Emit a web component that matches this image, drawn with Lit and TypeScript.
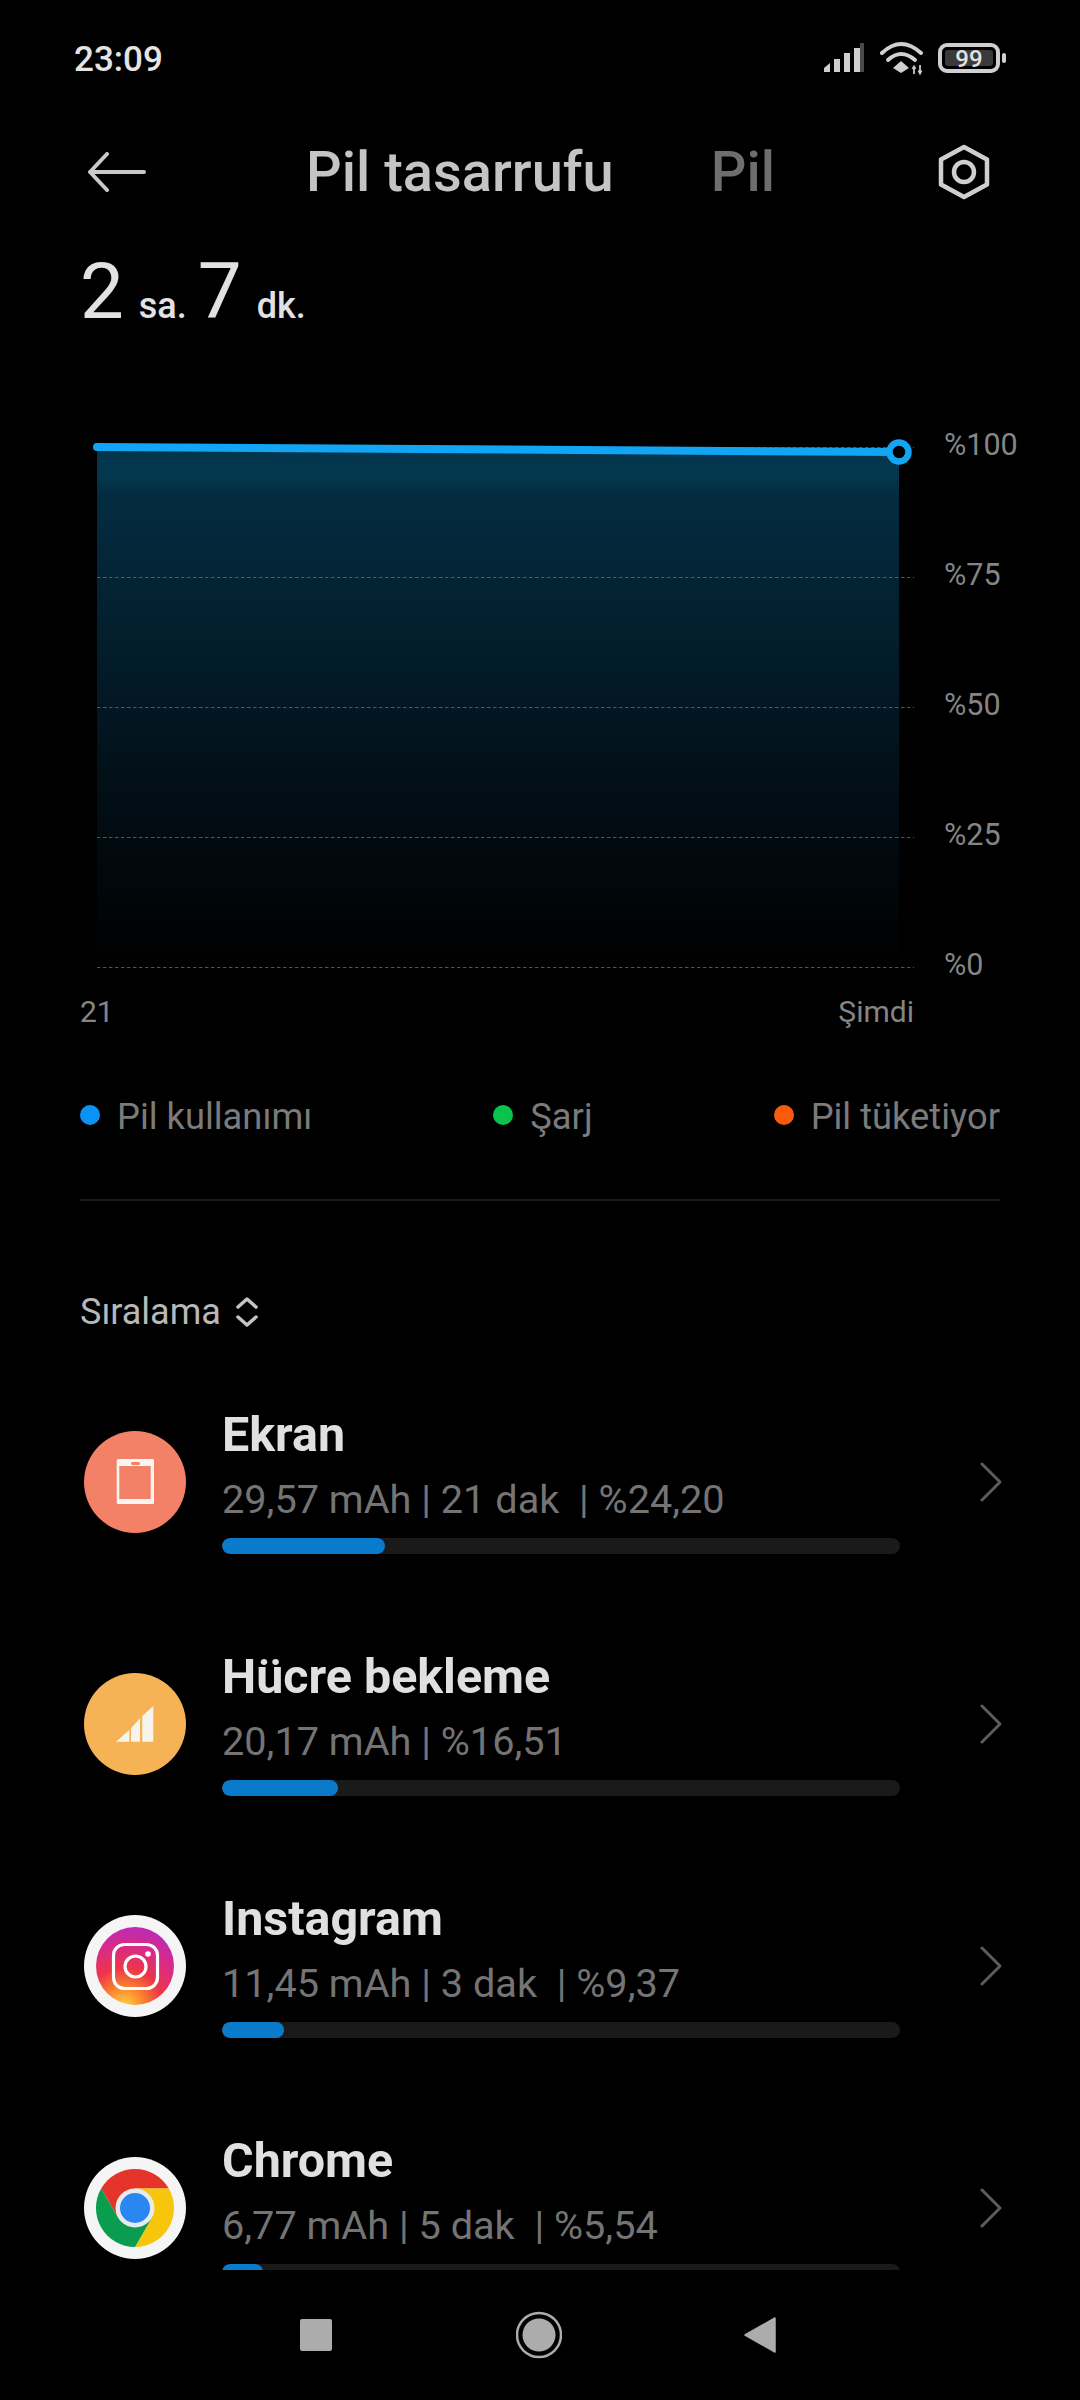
import { LitElement, html, css, svg } from "lit";
import { customElement } from "lit/decorators.js";

const rows = [
  { name: "Ekran", sub: "29,57 mAh | 21 dak  | %24,20", w: 163, icon: "screen" },
  { name: "Hücre bekleme", sub: "20,17 mAh | %16,51", w: 116, icon: "cell" },
  { name: "Instagram", sub: "11,45 mAh | 3 dak  | %9,37", w: 62, icon: "insta" },
  { name: "Chrome", sub: "6,77 mAh | 5 dak  | %5,54", w: 41, icon: "chrome" },
];

const icons: Record<string, unknown> = {
  screen: svg`<circle cx="51" cy="51" r="51" fill="#f28167"/>
    <rect x="32.700" y="28" width="37.300" height="45" rx="1.5" fill="#f7f4f2"/>
    <rect x="35.300" y="35" width="31.400" height="33" fill="#f28167"/>
    <rect x="47" y="31" width="9" height="3" rx="1.500" fill="#f28167"/>`,
  cell: svg`<circle cx="51" cy="51" r="51" fill="#f6b356"/>
    <path d="M32 68.700 L45.300 57 V68.700 Z M47 68.700 V55.300 L56 45.300 V68.700 Z M58.300 68.700 V43 L69.300 33 V68.700 Z" fill="#f7f4ee"/>`,
  insta: svg`<defs>
      <radialGradient id="ig" cx="0.36" cy="1.02" r="1.1">
        <stop offset="0" stop-color="#fdd44f"/>
        <stop offset="0.2" stop-color="#fb8f2c"/>
        <stop offset="0.45" stop-color="#ee3548"/>
        <stop offset="0.72" stop-color="#d62a8c"/>
        <stop offset="1" stop-color="#b62bc0"/>
      </radialGradient>
    </defs>
    <circle cx="51" cy="51" r="51" fill="#f5f5f5"/>
    <circle cx="51" cy="51" r="39" fill="url(#ig)"/>
    <rect x="29.500" y="29.500" width="44" height="44" rx="11" fill="none" stroke="#fff" stroke-width="3.200"/>
    <circle cx="51.500" cy="51.500" r="10.500" fill="none" stroke="#fff" stroke-width="3.200"/>
    <circle cx="64" cy="39" r="2.800" fill="#fff"/>`,
  chrome: svg`<circle cx="51" cy="51" r="51" fill="#f5f5f5"/>
    <path d="M84.800 31.500 A39 39 0 0 0 17.200 31.500 L34.100 60.750 L51 51 L51 31.500 Z" fill="#e5352b"/>
    <path d="M84.800 31.500 A39 39 0 0 1 51 90 L67.900 60.750 L51 51 L51 31.500 Z" fill="#f7c50c"/>
    <path d="M51 90 A39 39 0 0 1 17.200 31.500 L34.100 60.750 L51 51 L67.900 60.750 Z" fill="#0a9d4f"/>
    <circle cx="51" cy="51" r="19.500" fill="#e8eaed"/>
    <circle cx="51" cy="51" r="15" fill="#2a86f0"/>`,
};

@customElement("app-root")
export class AppRoot extends LitElement {
  static styles = css`
    :host {
      display: block;
      width: 1080px;
      height: 2400px;
      background: #000;
      overflow: hidden;
      font-family: Roboto, "Noto Sans", sans-serif;
      color: #ddd;
    }
    svg { display: block; flex: none; }
    .status {
      height: 118px;
      display: flex;
      align-items: center;
      padding: 0 70px 0 74px;
      box-sizing: border-box;
    }
    .clock { font-size: 35px; font-weight: 500; color: #e4e4e4; flex: 1; }
    .header {
      height: 108px;
      display: flex;
      align-items: center;
      padding-left: 88px;
    }
    .title { font-size: 56px; font-weight: 500; color: #c4c4c4; margin-left: 160px; white-space: nowrap; }
    .tab { font-size: 56px; font-weight: 500; color: #6e6e6e; margin-left: 97px; }
    .gear { margin-left: 163px; }
    .summary {
      height: 198px;
      box-sizing: border-box;
      padding: 20px 0 0 80px;
      display: flex;
      align-items: baseline;
      color: #e2e2e2;
    }
    .big { font-size: 78px; line-height: 92px; font-weight: 400; }
    .unit { font-size: 36px; font-weight: 500; margin: 0 11px 0 15px; }
    .chart { display: flex; height: 562px; padding-left: 80px; }
    .yaxis {
      margin: 1px 0 0 24px;
      display: flex;
      flex-direction: column;
      gap: 90px;
      font-size: 30.500px;
      color: #858585;
    }
    .yaxis span { height: 40px; line-height: 40px; }
    .xaxis {
      height: 54px;
      box-sizing: border-box;
      padding-bottom: 3px;
      width: 834px;
      margin-left: 80px;
      display: flex;
      justify-content: space-between;
      align-items: center;
      font-size: 30px;
      color: #858585;
    }
    .legend {
      height: 161px;
      margin: 0 80px;
      padding-bottom: 6px;
      box-sizing: border-box;
      display: flex;
      align-items: center;
      justify-content: space-between;
      border-bottom: 2px solid #1c1c1c;
      font-size: 36.300px;
      color: #7b7b7b;
    }
    .legend-item { display: flex; align-items: center; gap: 17px; }
    .dot { width: 20px; height: 20px; border-radius: 50%; margin-top: -4px; }
    .sort {
      height: 160px;
      box-sizing: border-box;
      padding: 62px 80px 0 80px;
      display: flex;
      align-items: center;
      gap: 12px;
      font-size: 36px;
      color: #b8b8b8;
    }
    .list { height: 909px; overflow: hidden; }
    .row {
      height: 242px;
      display: flex;
      align-items: center;
      padding-left: 84px;
    }
    .info { width: 678px; margin-left: 36px; padding-bottom: 6px; }
    .name { font-size: 48.400px; line-height: 60px; font-weight: 700; color: #e0e0e0; white-space: nowrap; }
    .sub { font-size: 39.700px; line-height: 60px; margin-top: 5px; color: #747474; white-space: pre; }
    .track { height: 16px; margin-top: 8px; background: #1a1a1a; border-radius: 8px; overflow: hidden; }
    .fill { height: 100%; background: #0a7acb; border-radius: 8px; }
    .chev { margin-left: 80px; }
    .nav { height: 130px; display: flex; align-items: center; padding-left: 300px; box-sizing: border-box; }
    .square { width: 32px; height: 32px; border-radius: 2px; background: #acacac; }
    .home { margin-left: 184px; }
    .tri { margin-left: 182px; }
  `;

  private statusIcons() {
    return html`<svg width="190" height="40" viewBox="820 40 190 40">
      <g fill="#cfcfcf">
        <path d="M824 73 V69 L830 64 V73 Z"/>
        <rect x="834" y="60" width="6" height="13"/>
        <rect x="844" y="54" width="6" height="19"/>
        <rect x="854" y="49" width="6" height="24"/>
      </g>
      <rect x="860" y="44" width="4" height="29" fill="#4a4a4a"/>
      <g fill="none" stroke="#d0d0d0" stroke-width="4" stroke-linecap="round">
        <path d="M882 54 Q901 36 921 54"/>
        <path d="M888 61 Q901 49 915 61"/>
      </g>
      <path d="M893 69 L901 62 L909 69 L901 74 Z" fill="#d0d0d0"/>
      <path d="M914 68 V75 M912.500 70 L914 67.500 L915.500 70 M920 66 V74 M918.500 71.500 L920 74.500 L921.500 71.500" stroke="#c8c8c8" stroke-width="1.800" fill="none"/>
      <rect x="940" y="46" width="58" height="26" rx="7" fill="none" stroke="#cfcfcf" stroke-width="4"/>
      <rect x="945" y="51" width="48" height="16" rx="3" fill="#3a3a3a"/>
      <rect x="1002" y="54" width="4" height="10" rx="2" fill="#cfcfcf"/>
      <text x="969" y="68" text-anchor="middle" font-family="Roboto" font-weight="500" font-size="24" fill="#e2e2e2">99</text>
    </svg>`;
  }

  private chart() {
    const grid = [447, 577, 707, 837, 967];
    return html`<svg width="840" height="562" viewBox="80 424 840 562">
      <defs>
        <linearGradient id="area" x1="0" y1="0" x2="0" y2="1">
          <stop offset="0" stop-color="#03344b"/>
          <stop offset="0.05" stop-color="#04384f"/>
          <stop offset="0.09" stop-color="#032c41"/>
          <stop offset="0.33" stop-color="#03202f"/>
          <stop offset="0.65" stop-color="#020f17"/>
          <stop offset="1" stop-color="#000"/>
        </linearGradient>
      </defs>
      <path d="M97 448 L899 452 V967 H97 Z" fill="url(#area)"/>
      ${grid.map(
        (y) => svg`<line x1="97" x2="914" y1=${y + 0.5} y2=${y + 0.5} stroke="#7b8c94" stroke-opacity="0.6" stroke-width="1" stroke-dasharray="3.500 2.500"/>`
      )}
      <line x1="97" y1="447" x2="899" y2="452" stroke="#12a5f4" stroke-width="8" stroke-linecap="round"/>
      <circle cx="899" cy="452" r="9.500" fill="#000" stroke="#12a5f4" stroke-width="6.500"/>
    </svg>`;
  }

  render() {
    return html`
      <div class="status">
        <span class="clock">23:09</span>
        ${this.statusIcons()}
      </div>
      <div class="header">
        <svg width="58" height="40" viewBox="0 0 58 40" fill="none" stroke="#c9c9c9" stroke-width="4" stroke-linecap="round" stroke-linejoin="round">
          <path d="M56 20 H2 M19 2 L2 20 L19 38"/>
        </svg>
        <span class="title">Pil tasarrufu</span>
        <span class="tab">Pil</span>
        <svg class="gear" width="52" height="56" viewBox="0 0 52 56" fill="none" stroke="#cfcfcf">
          <path d="M26 3 L49 15.500 V40.500 L26 53 L3 40.500 V15.500 Z" stroke-width="4.500" stroke-linejoin="round"/>
          <circle cx="26" cy="28" r="10" stroke-width="4.500"/>
        </svg>
      </div>
      <div class="summary">
        <span class="big">2</span><span class="unit">sa.</span><span class="big">7</span><span class="unit">dk.</span>
      </div>
      <div class="chart">
        ${this.chart()}
        <div class="yaxis"><span>%100</span><span>%75</span><span>%50</span><span>%25</span><span>%0</span></div>
      </div>
      <div class="xaxis"><span>21</span><span>Şimdi</span></div>
      <div class="legend">
        <div class="legend-item"><i class="dot" style="background:#0a93f5"></i>Pil kullanımı</div>
        <div class="legend-item"><i class="dot" style="background:#08c44f"></i>Şarj</div>
        <div class="legend-item"><i class="dot" style="background:#f95a0c"></i>Pil tüketiyor</div>
      </div>
      <div class="sort">
        <span>Sıralama</span>
        <svg width="26" height="30" viewBox="0 0 26 30" fill="none" stroke="#c4c4c4" stroke-width="3.500" stroke-linecap="round" stroke-linejoin="round">
          <path d="M5 10 L14 2 L23 10 M5 20 L14 28 L23 20"/>
        </svg>
      </div>
      <div class="list">
        ${rows.map(
          (r) => html`<div class="row">
            <svg width="102" height="102" viewBox="0 0 102 102">${icons[r.icon]}</svg>
            <div class="info">
              <div class="name">${r.name}</div>
              <div class="sub">${r.sub}</div>
              <div class="track"><div class="fill" style="width:${r.w}px"></div></div>
            </div>
            <svg class="chev" width="22" height="40" viewBox="0 0 22 40" fill="none" stroke="#5c5c5c" stroke-width="3" stroke-linecap="round" stroke-linejoin="round">
              <path d="M2 2 L20 20 L2 38"/>
            </svg>
          </div>`
        )}
      </div>
      <div class="nav">
        <div class="square"></div>
        <svg class="home" width="46" height="48" viewBox="0 0 46 48">
          <circle cx="23" cy="24" r="22" fill="none" stroke="#acacac" stroke-width="2.500"/>
          <circle cx="23" cy="24" r="16.500" fill="#acacac"/>
        </svg>
        <svg class="tri" width="32" height="36" viewBox="0 0 32 36">
          <path d="M31 1 V35 L1 18 Z" fill="#acacac" stroke="#acacac" stroke-width="1.500" stroke-linejoin="round"/>
        </svg>
      </div>
    `;
  }
}
